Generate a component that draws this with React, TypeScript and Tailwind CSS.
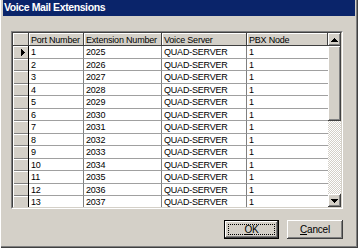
const rows = Array.from({ length: 13 }, (_, i) => ({ port: i + 1, ext: 2025 + i }))

const cols = [
  { label: 'Port Number', w: 'w-[55px]' },
  { label: 'Extension Number', w: 'w-[78px]' },
  { label: 'Voice Server', w: 'w-[85px]' },
  { label: 'PBX Node', w: 'w-[81px]' },
]

const raised =
  'bg-[#d4d0c8] shadow-[inset_-1px_-1px_#404040,inset_1px_1px_#ffffff,inset_-2px_-2px_#808080,inset_2px_2px_#d4d0c8]'

function UpArrow() {
  return (
    <svg width="7" height="4" viewBox="0 0 7 4" shapeRendering="crispEdges">
      <path d="M3 0h1v1H3z M2 1h3v1H2z M1 2h5v1H1z M0 3h7v1H0z" fill="#000" />
    </svg>
  )
}

function DownArrow() {
  return (
    <svg width="7" height="4" viewBox="0 0 7 4" shapeRendering="crispEdges">
      <path d="M0 0h7v1H0z M1 1h5v1H1z M2 2h3v1H2z M3 3h1v1H3z" fill="#000" />
    </svg>
  )
}

function RightArrow() {
  return (
    <svg width="4" height="7" viewBox="0 0 4 7" shapeRendering="crispEdges">
      <path d="M0 0h1v7H0z M1 1h1v5H1z M2 2h1v3H2z M3 3h1v1H3z" fill="#000" />
    </svg>
  )
}

function Grid() {
  return (
    <div className="flex w-[332px] h-[178px] border border-t-[#808080] border-l-[#808080] border-b-white border-r-white">
      <div className="flex flex-1 overflow-hidden bg-white border border-t-[#404040] border-l-[#404040] border-b-[#d4d0c8] border-r-[#d4d0c8]">
        <div className="flex flex-col w-[315px] overflow-hidden">
          {/* header */}
          <div className="flex h-[13px] shrink-0">
            <div className="w-[16px] h-full bg-[#d4d0c8] shadow-[inset_1px_1px_#ffffff] border-r border-b border-[#404040]" />
            {cols.map((c) => (
              <div
                key={c.label}
                className={`${c.w} h-full bg-[#d4d0c8] shadow-[inset_1px_1px_#ffffff] border-r border-b border-[#404040] pl-[2px] pt-[1px] leading-[12px] whitespace-nowrap overflow-hidden`}
              >
                {c.label}
              </div>
            ))}
          </div>
          {rows.map((r, i) => (
            <div key={r.port} className="flex h-[12.5px] shrink-0">
              <div className="w-[16px] h-full bg-[#d4d0c8] shadow-[inset_1px_1px_#ffffff,inset_0_-1px_#808080] border-r border-black flex items-center justify-end pr-[3px]">
                {i === 0 && <RightArrow />}
              </div>
              <div className="w-[55px] h-full border-r border-r-[#808080] border-b border-b-[#a0a0a0] pl-[2px] pt-[1px] leading-[11px]">{r.port}</div>
              <div className="w-[78px] h-full border-r border-r-[#808080] border-b border-b-[#a0a0a0] pl-[2px] pt-[1px] leading-[11px]">{r.ext}</div>
              <div className="w-[85px] h-full border-r border-r-[#808080] border-b border-b-[#a0a0a0] pl-[2px] pt-[1px] leading-[11px]">QUAD-SERVER</div>
              <div className="w-[81px] h-full border-b border-b-[#a0a0a0] pl-[2px] pt-[1px] leading-[11px]">1</div>
            </div>
          ))}
        </div>
        {/* vertical scrollbar */}
        <div className="flex flex-col w-[13px]">
          <div className={`h-[13px] ${raised} flex items-center justify-center`}>
            <UpArrow />
          </div>
          <div className={`h-[75px] ${raised}`} />
          <div className="flex-1 bg-[image:repeating-conic-gradient(#ffffff_0_25%,#d4d0c8_0_50%)] bg-[length:2px_2px]" />
          <div className={`h-[13px] ${raised} flex items-center justify-center`}>
            <DownArrow />
          </div>
        </div>
      </div>
    </div>
  )
}

export default function App() {
  return (
    <div className="w-[358px] h-[248px] flex flex-col bg-[#d4d0c8] px-[3px] pb-[3px] shadow-[inset_1px_0_#ffffff,inset_-1px_-1px_#404040,inset_-2px_-2px_#808080] font-['Liberation_Sans',Arial,sans-serif] text-[9px] tracking-[-0.2px] text-black">
      <div className="h-[16px] shrink-0 bg-[#0a246a] pl-[1px] flex items-center font-bold text-[10.5px] tracking-[-0.4px] text-white">
        Voice Mail Extensions
      </div>
      <div className="flex flex-col pl-[8px] pt-[15px]">
        <Grid />
        <div className="flex justify-end gap-[8px] mt-[11px] w-[332px] text-[10px]">
          <div className="w-[55px] h-[19px] border border-black">
            <div className={`w-full h-full ${raised} p-[3px]`}>
              <div className="w-full h-full border border-dotted border-black flex items-center justify-center leading-none">
                <span>
                  <span className="underline">O</span>K
                </span>
              </div>
            </div>
          </div>
          <div className={`w-[56px] h-[19px] ${raised} flex items-center justify-center leading-none`}>
            <span>
              <span className="underline">C</span>ancel
            </span>
          </div>
        </div>
      </div>
    </div>
  )
}
